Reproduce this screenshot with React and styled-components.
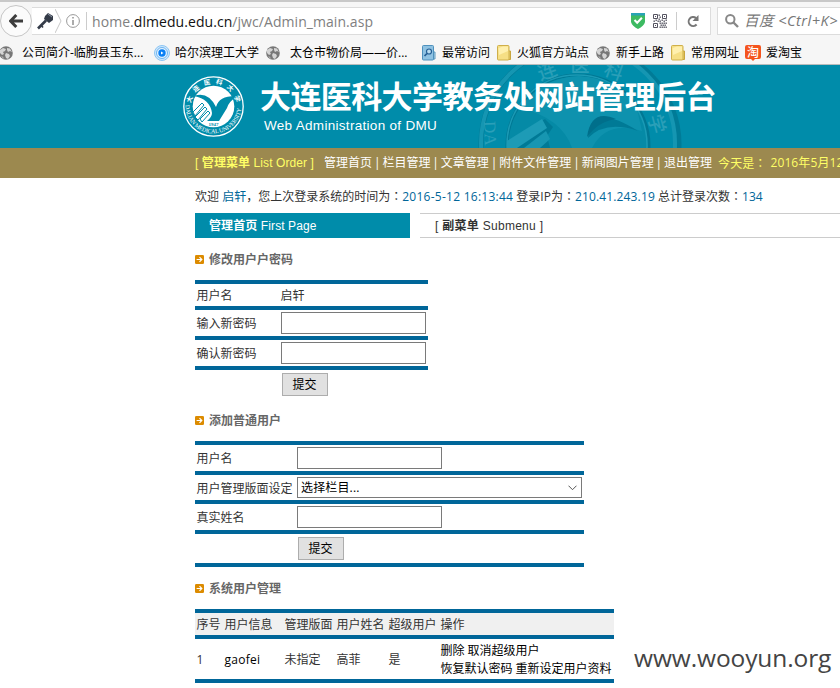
import React from 'react';
import styled, { createGlobalStyle } from 'styled-components';

const Global = createGlobalStyle`
  * { box-sizing: border-box; }
  body { margin: 0; background: #fff; overflow: hidden; }
`;
const ui = '"Open Sans", "Noto Sans CJK SC", sans-serif';
const arial = '"Liberation Sans", "Noto Sans CJK SC", sans-serif';

const Page = styled.div`
  width: 840px; height: 688px; overflow: hidden; background: #fff;
  font: 12px/18px ${ui}; color: #333; white-space: nowrap;
`;
const Toolbar = styled.header`
  height: 65px; background: #f6f6f6; border-top: 2px solid #c8c8c8; border-bottom: 1px solid #b9bcbc;
`;
const AddressRow = styled.div`display: flex; height: 37px; align-items: center;`;
const BackButton = styled.div`
  width: 32px; height: 32px; border: 1px solid #c6c6c6; border-radius: 50%; background: #fbfbfb;
  display: flex; align-items: center; justify-content: center; flex: none;
`;
const UrlField = styled.div`
  display: flex; align-items: center; width: 679px; height: 28px; background: #fff;
  border: 1px solid #dcdcdc; border-left: 0; flex: none; margin: 1px 6px 0 0;
`;
const Url = styled.div`
  width: 539px; margin-left: 5px; padding-top: 1px; font-size: 14px; line-height: 26px; color: #808080;
  letter-spacing: 0.06px;
`;
const Host = styled.span`color: #111;`;
const Divider = styled.i`width: 1px; height: 18px; background: #ccc; margin-left: ${p => p.$left}px;`;
const SearchField = styled.div`
  display: flex; align-items: center; width: 130px; height: 28px; margin-top: 1px; flex: none; background: #fff;
  border: 1px solid #dcdcdc; padding-left: 7px; gap: 5px; font-size: 14.5px; font-style: italic; color: #777;
  letter-spacing: 0.5px; line-height: 24px;
`;
const Icon = styled.svg`display: block; flex: none; margin-left: ${p => p.$left || 0}px;`;
const Bookmarks = styled.nav`display: flex; height: 25px; align-items: center; padding-top: 2px; color: #000;`;
const Bookmark = styled.div`display: flex; align-items: center; width: ${p => p.$w}px; flex: none;`;
const BookmarkIcon = styled.span`width: ${p => p.$w}px; flex: none;`;

const Banner = styled.div`height: 83px; background: #008caa; display: grid; padding-left: 183px; overflow: hidden;`;
const Seal = styled.svg`grid-area: 1 / 1; width: 61px; height: 61px; margin-top: 11px;`;
const Relief = styled.svg`grid-area: 1 / 1; width: 210px; height: 83px; margin-left: 291px;`;
const Titles = styled.div`grid-area: 1 / 1; padding: 8px 0 0 77px; color: #fff;`;
const Title = styled.h1`
  margin: 0; font: 700 31px/44px "Noto Sans CJK SC", sans-serif; letter-spacing: -0.6px;
`;
const Subtitle = styled.div`font: 13.5px/16px ${arial}; margin: 1px 0 0 4px; letter-spacing: 0.3px;`;

const NavBar = styled.nav`
  display: flex; align-items: center; height: 30px; padding-left: 195px; background: #9c894f; color: #fff;
`;
const NavHead = styled.div`width: 129px; flex: none; color: #ff6; font-family: ${arial}; letter-spacing: 0.08px;`;
const Pipe = styled.span`width: 10.4px; text-align: center; flex: none;`;
const Today = styled.div`display: flex; gap: 4px; margin-left: 6px; color: #ff6; letter-spacing: 0.1px;`;
const Colon = styled.span`font-family: "Noto Sans CJK TC", sans-serif;`;

const Main = styled.main`padding-left: 195px;`;
const Welcome = styled.div`height: 35px; line-height: 35px;`;
const Blue = styled.span`color: #069; letter-spacing: ${p => p.$track || 0}px;`;
const Tabs = styled.div`display: flex; gap: 10px; height: 25px; line-height: 26px; font-family: ${arial};`;
const Tab = styled.div`width: 215px; background: #008caa; color: #fff; padding-left: 14px; letter-spacing: 0.1px;`;
const Submenu = styled.div`
  flex: 1; border: solid #ccc; border-width: 1px 0; padding-left: 15px; line-height: 24px; letter-spacing: 0.28px;
`;
const Heading = styled.h2`
  display: flex; align-items: center; gap: 5px; margin: 13px 0 11px; height: 18px;
  font-size: 12px; font-weight: 700; color: #666;
`;
const HeadingMark = styled.span`padding-bottom: 1px;`;
const Sheet = styled.section`width: ${p => p.$w}px; border-top: 4px solid #069;`;
const Row = styled.div`
  display: grid; grid-template-columns: ${p => p.$cols}; align-items: center;
  height: ${p => p.$h}px; padding-left: 1px; border-bottom: ${p => (p.$open ? 0 : 4)}px solid #069;
  background: ${p => (p.$head ? '#f0f0f0' : '#fff')};
`;
const Cell = styled.span`
  padding: 2px 0 0 0.5px; color: ${p => (p.$dark ? '#000' : 'inherit')}; letter-spacing: ${p => p.$track || 0}px;
`;
const Input = styled.input`
  width: 145px; height: 22px; border: 1px solid #7a7a7a; background: #fff; padding: 0; display: block; margin: 0;
`;
const Select = styled.div`
  display: flex; align-items: center; justify-content: space-between; width: 285px; height: 21px;
  border: 1px solid #7a7a7a; padding: 1px 4px 0 3px; color: #000; font-size: 12px; letter-spacing: 0.15px;
`;
const Submit = styled.button`
  width: 46px; height: 23px; margin-left: 1px; padding: 1px 1px 0 0; border: 1px solid #adadad; background: #e1e1e1;
  color: #000; font: 12px/20px ${ui};
`;
const Footer = styled.div`display: flex; align-items: flex-start;`;
const Site = styled.div`
  font: 24.5px/34px "Open Sans", sans-serif; color: #444; margin: 32px 0 0 20px; letter-spacing: -0.1px;
`;

const Bullet = () => (
  <HeadingMark>
    <Icon width="9" height="9" viewBox="0 0 9 9">
      <rect width="9" height="9" rx="1.3" fill="#dc8b00" />
      <path d="M1.6 4.5h5M4.5 2.2l2.3 2.3-2.3 2.3" fill="none" stroke="#fff" strokeWidth="1.2" />
    </Icon>
  </HeadingMark>
);
const Globe = ({ left = 0 }) => (
  <Icon width="14" height="14" viewBox="0 0 14 14" $left={left}>
    <circle cx="7" cy="7" r="6.8" fill="#777" />
    <path d="M1 4l3-2 3 1-1 2-2 1 1 2-2 1-2-2zM8 2l3 .5L13 6l-2-1-2 1-1-2zM7 7l3 1 1 2-2 3-2-1-1-3zM2 10l2 1 1 2z" fill="#d4d4d4" />
  </Icon>
);
const Folder = () => (
  <Icon width="15" height="16" viewBox="0 0 15 16">
    <path d="M10 6h3.5v8.5H10z" fill="#e7cd69" stroke="#c9a63f" />
    <rect x=".5" y=".5" width="11.5" height="14.5" rx="1" fill="#f6df85" stroke="#cfaf4b" />
    <path d="M1.5 3L6 1.5h5V6L2 10z" fill="#fff0ae" />
  </Icon>
);
const Rings = () => (
  <Icon width="16" height="16" viewBox="0 0 16 16">
    <circle cx="8" cy="8" r="7.5" fill="#cfe7fc" stroke="#8cc5f3" />
    <circle cx="8" cy="8" r="5.5" fill="#e6f4ff" stroke="#6fb5f0" />
    <circle cx="8" cy="8" r="3.7" fill="#087ff5" />
    <path d="M7 6.5l2.5 1.5L7 9.5z" fill="#fff" />
  </Icon>
);
const Visited = () => (
  <Icon width="14" height="16" viewBox="0 0 14 16">
    <path d="M10 7h3v7h-3z" fill="#b6d5e7" stroke="#5d9abf" />
    <rect x=".5" y=".5" width="11" height="14.5" rx="1" fill="#8fc2e2" stroke="#4e91bd" />
    <circle cx="7" cy="6.5" r="2.5" fill="#b9dcf0" stroke="#245e94" strokeWidth="1.2" />
    <path d="M5 8.5l-2.5 2.5" stroke="#245e94" strokeWidth="1.7" />
  </Icon>
);
const Tao = () => (
  <Icon width="16" height="16" viewBox="0 0 16 16">
    <path d="M2 0h12q2 0 2 2v10q0 2-2 2h-4l-2 2-2-2H2q-2 0-2-2V2q0-2 2-2z" fill="#f4541d" />
    <text x="8" y="11.5" textAnchor="middle" fontSize="12" fontWeight="500" fontFamily="Noto Sans CJK SC, sans-serif" fill="#fff">淘</text>
  </Icon>
);
const bookmarks = [
  [-1, 154, 22, '公司简介-临朐县玉东...', Globe],
  [0, 112, 21, '哈尔滨理工大学', Rings],
  [0, 156, 24, '太仓市物价局——价...', Globe],
  [0, 75, 20, '最常访问', Visited],
  [0, 99, 20, '火狐官方站点', Folder],
  [0, 75, 20, '新手上路', Globe],
  [0, 74, 20, '常用网址', Folder],
  [0, 80, 21, '爱淘宝', Tao],
];
const menu = ['管理首页', '栏目管理', '文章管理', '附件文件管理', '新闻图片管理', '退出管理'];
const qrCells = [
  [6, 1], [7, 3], [6, 5], [1, 7], [3, 6], [5, 7], [7, 7], [9, 6], [11, 7], [13, 6],
  [7, 9], [8, 11], [7, 13], [9, 9], [11, 9], [13, 9], [10, 11], [12, 11], [9, 13], [11, 13], [13, 13],
];
const reliefChars = [
  ['连', 547, 78, -20],
  ['医', 580, 72, 0],
  ['科', 614, 78, 20],
  ['学', 657, 131, 75],
];

export default function App() {
  const userCols = '28px 60px 52px 52px 52px 1fr';
  return (
    <Page>
      <Global />
      <Toolbar>
        <AddressRow>
          <BackButton>
            <Icon width="14" height="14" viewBox="0 0 14 14">
              <path d="M7.3 1L1.5 7l5.8 6M2 7h12" fill="none" stroke="#3d3d3d" strokeWidth="3" />
            </Icon>
          </BackButton>
          <UrlField>
            <Icon width="17" height="17" viewBox="0 0 17 17" $left={5}>
              <path d="M1 15.5l8-8" stroke="#343b48" strokeWidth="2.6" />
              <path d="M4 12l2 2.5" stroke="#343b48" strokeWidth="1.6" />
              <path d="M8 3l3-3 5 3v4l-4 3-5-4z" fill="#343b48" />
              <path d="M11 1l4 3" stroke="#8d96a4" />
            </Icon>
            <Icon width="7" height="26" viewBox="0 0 7 26" $left={1}>
              <path d="M0 1l6 12-6 12" fill="none" stroke="#c8c8c8" />
            </Icon>
            <Icon width="14" height="14" viewBox="0 0 14 14" $left={4}>
              <circle cx="7" cy="7" r="6.4" fill="none" stroke="#999" />
              <path d="M7 6v5M7 3v1.6" stroke="#888" strokeWidth="1.4" />
            </Icon>
            <Divider $left={6} />
            <Url>home.<Host>dlmedu.edu.cn</Host>/jwc/Admin_main.asp</Url>
            <Icon width="14" height="16" viewBox="0 0 14 16">
              <path d="M0 1h14v8q-1 4-7 7-6-3-7-7z" fill="#3dba62" />
              <path d="M0 0h14v2.5H0z" fill="#29a3b5" />
              <path d="M3.5 7l2.7 2.7 4.7-5" fill="none" stroke="#fff" strokeWidth="2" />
            </Icon>
            <Icon width="14" height="14" viewBox="0 0 14 14" $left={8}>
              <path d="M.5.5h4v4h-4zM9.5.5h4v4h-4zM.5 9.5h4v4h-4z" fill="none" stroke="#555461" />
              <path d="M2 2h1v1H2zM11 2h1v1h-1zM2 11h1v1H2z" fill="#555461" />
              {qrCells.map(([x, y]) => <rect key={`${x}-${y}`} x={x - 0.5} y={y - 0.5} width="1.4" height="1.4" fill="#555461" />)}
            </Icon>
            <Divider $left={9} />
            <Icon width="13" height="13" viewBox="0 0 13 13" $left={10}>
              <path d="M9.6 9.5A4.5 4.5 0 1 1 9 3.1" fill="none" stroke="#777" strokeWidth="2" />
              <path d="M11.5 0v6h-6z" fill="#777" />
            </Icon>
          </UrlField>
          <SearchField>
            <Icon width="14" height="14" viewBox="0 0 14 14">
              <circle cx="5.3" cy="5.3" r="4.2" fill="none" stroke="#888" strokeWidth="2" />
              <path d="M8.5 8.5L13 13" stroke="#888" strokeWidth="2.4" />
            </Icon>
            <span>百度 &lt;Ctrl+K&gt;</span>
          </SearchField>
        </AddressRow>
        <Bookmarks>
          {bookmarks.map(([left, w, iconW, label, Mark]) => (
            <Bookmark key={label} $w={w}>
              <BookmarkIcon $w={iconW}><Mark left={left} /></BookmarkIcon>{label}
            </Bookmark>
          ))}
        </Bookmarks>
      </Toolbar>

      <Banner>
        <Relief viewBox="474 65 210 83">
          <g fill="none">
            <circle cx="580" cy="144" r="99" stroke="#007b97" strokeWidth="5" />
            <circle cx="578" cy="143" r="97" stroke="#1596b2" strokeWidth="4" />
            <circle cx="578" cy="146" r="71" fill="#058aa6" stroke="#007894" strokeWidth="3" />
            <circle cx="577" cy="145" r="70" stroke="#1a9ab5" strokeWidth="1.5" />
          </g>
          <path d="M520 108Q543 77 579 76Q617 78 637 109L642 131Q606 120 592 148H572Q562 118 520 108z" fill="#0e92ae" />
          <path d="M510 142L545 119l8 8-6 9 3 12H512z" fill="#007a96" />
          <path d="M507 141L542 119l5 9-30 20h-10z" fill="#1d9bb6" />
          <path d="M524 148l22-17 4 8-10 9z" fill="#1796b1" />
          <path d="M588 138Q590 101 638 131Q606 120 588 138z" fill="#007a96" />
          <path d="M587 137Q591 108 616 119Q599 121 587 137z" fill="#006f8b" />
          <g fontFamily="Noto Sans CJK SC, sans-serif" fontWeight="500" fontSize="19" fill="#2a9fb8" textAnchor="middle">
            {reliefChars.map(([c, x, y, a]) => <text key={c} x={x} y={y} transform={`rotate(${a} ${x} ${y - 7})`}>{c}</text>)}
          </g>
          <text x="490" y="127" transform="rotate(88 490 121)" fontFamily="Liberation Serif, serif" fontSize="17" fill="#2a9fb8">DA</text>
        </Relief>
        <Seal viewBox="0 0 61 61">
          <defs>
            <path id="seal-top" d="M8 30.5A22.5 22.5 0 0 1 53 30.5" />
            <path id="seal-bottom" d="M2.6 27A28 28 0 1 0 58.4 27" />
          </defs>
          <circle cx="30.5" cy="30.5" r="29.7" fill="none" stroke="#fff" strokeWidth="1.3" />
          <circle cx="30.5" cy="30.5" r="20.8" fill="#fff" />
          <path d="M11 20Q25 15 33 31Q36 19 55 20Q46 25 44 32L36 45H24Q29 41 29 37Q27 23 11 20z" fill="#008caa" />
          <path d="M10 36l9-9 2 2-9 11zM12 41l10-10 2 2-9 11zM17 43l8-8 2 2-8 9z" fill="#fff" stroke="#008caa" strokeWidth="1" />
          <text fontFamily="Noto Sans CJK SC, sans-serif" fontSize="6.5" fontWeight="700" fill="#fff" letterSpacing="4.8">
            <textPath href="#seal-top" startOffset="3">大连医科大学</textPath>
          </text>
          <text fontFamily="Liberation Serif, serif" fontSize="6" fill="#fff">
            <textPath href="#seal-bottom" startOffset="2" textLength="85">DALIAN MEDICAL UNIVERSITY</textPath>
          </text>
          <text x="30.5" y="50" textAnchor="middle" fontFamily="Liberation Serif, serif" fontSize="5" fontWeight="700" fill="#008caa">1947</text>
        </Seal>
        <Titles>
          <Title>大连医科大学教务处网站管理后台</Title>
          <Subtitle>Web Administration of DMU</Subtitle>
        </Titles>
      </Banner>

      <NavBar>
        <NavHead>[ <b>管理菜单</b> List Order ]</NavHead>
        {menu.map((m, i) => (
          <React.Fragment key={m}>{i > 0 && <Pipe>|</Pipe>}<span>{m}</span></React.Fragment>
        ))}
        <Today><span>今天是<Colon>：</Colon></span><span>2016年5月12日</span></Today>
      </NavBar>

      <Main>
        <Welcome>
          欢迎 <Blue>启轩</Blue>，您上次登录系统的时间为<Colon>：</Colon><Blue $track={0.26}>2016-5-12 16:13:44</Blue> 登录IP为<Colon>：</Colon><Blue $track={0.15}>210.41.243.19</Blue> 总计登录次数<Colon>：</Colon><Blue>134</Blue>
        </Welcome>
        <Tabs>
          <Tab><b>管理首页</b> First Page</Tab>
          <Submenu>[ <b>副菜单</b> Submenu ]</Submenu>
        </Tabs>

        <Heading><Bullet />修改用户户密码</Heading>
        <Sheet $w={233}>
          <Row $h={26} $cols="84px 1fr"><Cell>用户名</Cell><Cell>启轩</Cell></Row>
          <Row $h={30} $cols="85px 1fr"><Cell>输入新密码</Cell><Input /></Row>
          <Row $h={30} $cols="85px 1fr"><Cell>确认新密码</Cell><Input /></Row>
          <Row $h={29} $cols="85px 1fr" $open><Cell /><Submit>提交</Submit></Row>
        </Sheet>

        <Heading><Bullet />添加普通用户</Heading>
        <Sheet $w={389}>
          <Row $h={30} $cols="101px 1fr"><Cell>用户名</Cell><Input /></Row>
          <Row $h={29} $cols="101px 1fr">
            <Cell>用户管理版面设定</Cell>
            <Select>
              选择栏目...
              <Icon width="9" height="6" viewBox="0 0 9 6"><path d="M.5.7l4 4 4-4" fill="none" stroke="#555" /></Icon>
            </Select>
          </Row>
          <Row $h={30} $cols="101px 1fr"><Cell>真实姓名</Cell><Input /></Row>
          <Row $h={33} $cols="101px 1fr"><Cell /><Submit>提交</Submit></Row>
        </Sheet>

        <Heading><Bullet />系统用户管理</Heading>
        <Footer>
          <Sheet $w={419}>
            <Row $h={26} $cols={userCols} $head>
              <Cell>序号</Cell><Cell>用户信息</Cell><Cell>管理版面</Cell><Cell>用户姓名</Cell><Cell>超级用户</Cell><Cell>操作</Cell>
            </Row>
            <Row $h={44} $cols={userCols}>
              <Cell>1</Cell><Cell $dark $track={0.25}>gaofei</Cell><Cell>未指定</Cell><Cell>高菲</Cell><Cell>是</Cell>
              <Cell $dark>删除 取消超级用户<br />恢复默认密码 重新设定用户资料</Cell>
            </Row>
          </Sheet>
          <Site>www.wooyun.org</Site>
        </Footer>
      </Main>
    </Page>
  );
}
